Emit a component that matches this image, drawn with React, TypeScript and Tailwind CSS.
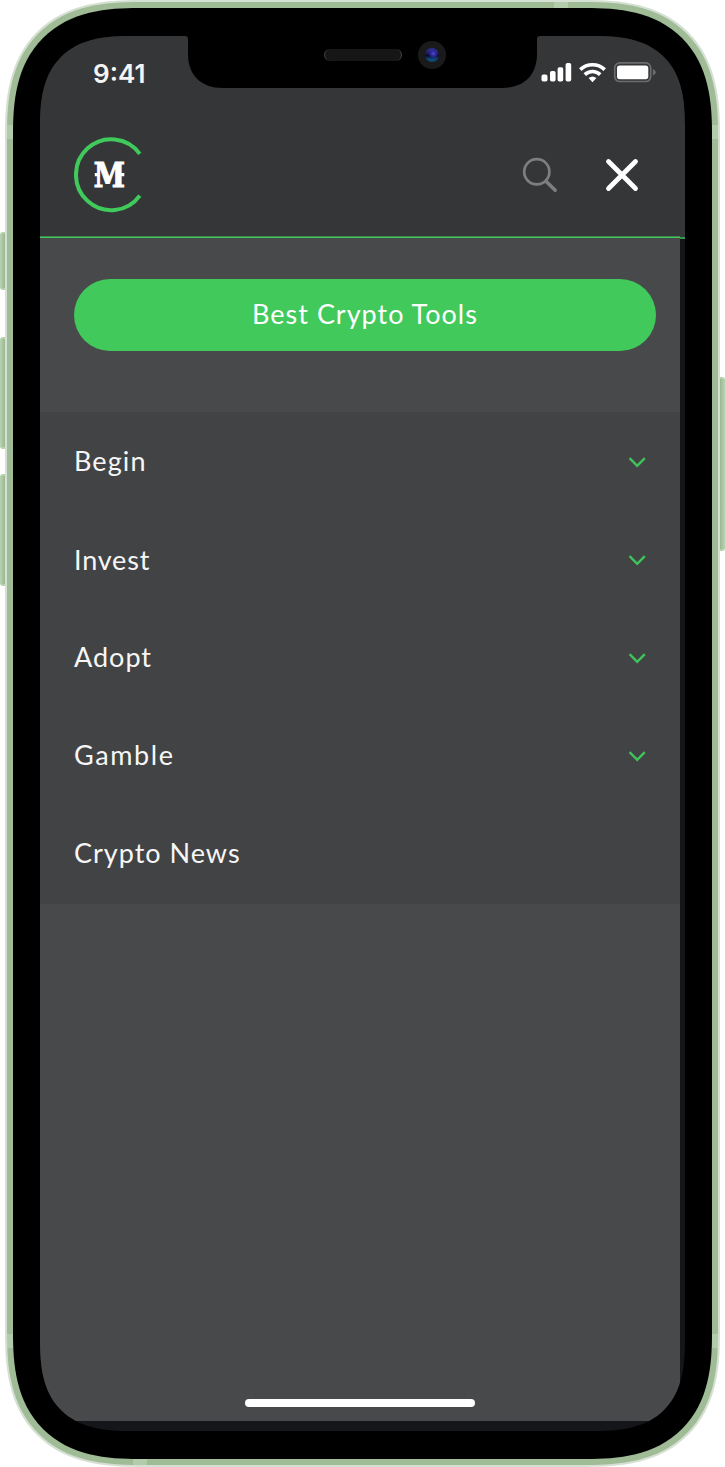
import React from "react";

const items = [
  { label: "Begin", text: "tracking-[1.1px] pb-[4px]", open: true },
  { label: "Invest", text: "tracking-[0.8px] pb-[2px]", open: true },
  { label: "Adopt", text: "tracking-[1px] pb-[4px]", open: true },
  { label: "Gamble", text: "tracking-[1.6px] pb-[4px]", open: true },
  { label: "Crypto News", text: "tracking-[1px] pb-[4px]", open: false },
];

function Logo() {
  return (
    <svg width="68" height="76" viewBox="0 0 68 76" className="block">
      <path d="M65.8 16.8 A35.3 35.5 0 1 0 65.8 58.6" fill="none" stroke="#3fca5b" strokeWidth="4" />
      <text x="19.8" y="49.6" fontFamily="DejaVu Serif" fontWeight="700" fontSize="33" fill="#fff" stroke="#fff" strokeWidth="1.1" textLength="31.2" lengthAdjust="spacingAndGlyphs">M</text>
      <path d="M20.8 37.6h5M45.3 37.6h5" stroke="#fff" strokeWidth="3.4" />
    </svg>
  );
}

function StatusIcons() {
  return (
    <svg width="116" height="22" viewBox="0 0 116 22" className="block">
      <g fill="#fff">
        <rect x="1.5" y="13.6" width="6" height="7" rx="1.8" />
        <rect x="10" y="10" width="5.6" height="10.6" rx="1.8" />
        <rect x="17.6" y="6.2" width="5.6" height="14.4" rx="1.8" />
        <rect x="25.6" y="2" width="5.6" height="18.6" rx="1.8" />
      </g>
      <g fill="none" stroke="#fff" strokeWidth="3.6">
        <path d="M40.3 8.6a17.6 17.6 0 0 1 24.4 0" />
        <path d="M44.8 13.6a11 11 0 0 1 15.4 0" />
      </g>
      <path d="M48.6 17.1a6 6 0 0 1 7.8 0l-3.9 4.1z" fill="#fff" />
      <rect x="74.7" y="1.9" width="36" height="18.6" rx="5" fill="none" stroke="#6b6c6e" strokeWidth="1.7" />
      <rect x="77" y="4.6" width="31.3" height="13.6" rx="2.6" fill="#fff" />
      <path d="M112.9 8q2.8 1 2.8 3.3t-2.8 3.3z" fill="#6b6c6e" />
    </svg>
  );
}

function Chevron() {
  return (
    <svg width="18" height="14" viewBox="0 0 18 14" fill="none" stroke="#3fc45b" strokeWidth="2.4">
      <path d="M1.6 3.2l7.6 7.6L16.8 3.2" />
    </svg>
  );
}

function SideButton({ className }: { className: string }) {
  return <div className={"w-[10px] rounded-[3px] border-y-2 border-[#b4d3ad] to-60% from-[#b9d4b1] to-[#94b08c] " + className} />;
}

function Notch() {
  return (
    <div className="absolute inset-x-0 top-0 flex justify-center">
      <div className="grid w-[355px] grid-cols-1 grid-rows-1">
        <svg width="355" height="52" viewBox="0 0 355 52" className="col-start-1 row-start-1 block">
          <path d="M0 0Q3 0 3 3V18C3 39 16 52 38 52H317C339 52 352 39 352 18V3Q352 0 355 0Z" fill="#000" />
        </svg>
        <div className="z-10 col-start-1 row-start-1 flex h-[38px] items-center gap-4 pl-[139px]">
          <div className="h-[12px] w-[78px] rounded-full border-x border-[#444] bg-[#161616]" />
          <div className="flex size-[28px] items-center justify-center rounded-full bg-[#1a1a1b]">
            <div className="size-[14px] rounded-full bg-[radial-gradient(circle_at_60%_40%,#5a48c8_0%,#2d2a9a_20%,transparent_45%),linear-gradient(to_bottom,#2c2c90_15%,#090b2c_55%,#0c4a78_80%)]" />
          </div>
        </div>
      </div>
    </div>
  );
}

export default function App() {
  return (
    <div className="flex h-[1467px] w-[725px] overflow-hidden bg-white font-[Lato,sans-serif]">
      <div className="flex w-[5px] shrink-0 flex-col pt-[232px]">
        <SideButton className="h-[58px] shrink-0 bg-gradient-to-r" />
        <SideButton className="mt-[47px] h-[112px] shrink-0 bg-gradient-to-r" />
        <SideButton className="mt-[25px] h-[112px] shrink-0 bg-gradient-to-r" />
      </div>
      <div className="z-10 h-[1467px] w-[715px] shrink-0 rounded-[134px] bg-[#d5e0d2] p-[2px] [corner-shape:superellipse(1.35)]">
        <div className="h-full rounded-[132px] bg-[#9fbc97] bg-[linear-gradient(#b2cbab,#b2cbab),linear-gradient(#b2cbab,#b2cbab),linear-gradient(#b2cbab,#b2cbab),linear-gradient(#b2cbab,#b2cbab)] bg-[length:14px_6px,14px_6px,100%_14px,100%_14px] bg-[position:547px_0,126px_100%,0_123px,0_1332px] bg-no-repeat p-[6px] [corner-shape:superellipse(1.35)]">
          <div className="h-full rounded-[126px] bg-black px-[27px] py-[28px] [corner-shape:superellipse(1.35)]">
            <div className="relative flex h-full w-[645px] flex-col overflow-hidden rounded-[92px] bg-[#15161a] [corner-shape:superellipse(1.42)]">
              <header className="flex h-[200px] shrink-0 flex-col bg-[#353638]">
                <div className="flex h-[72px] items-center justify-between pl-[53px] pr-[29px]">
                  <span className="pt-[4px] font-['Inter',sans-serif] text-[26px] font-semibold leading-none text-[#f4f4f4]">9:41</span>
                  <StatusIcons />
                </div>
                <div className="flex items-center pl-[34px] pr-[46px] pt-[29px]">
                  <Logo />
                  <svg width="36" height="36" viewBox="0 0 36 36" fill="none" stroke="#7d7e7f" strokeWidth="2.7" className="ml-auto">
                    <circle cx="14.8" cy="14.8" r="12.6" />
                    <path d="M24 24.3l9.2 9" strokeWidth="3.6" strokeLinecap="round" />
                  </svg>
                  <svg width="34" height="34" viewBox="0 0 34 34" stroke="#fff" strokeWidth="4.8" strokeLinecap="round" className="ml-[47px]">
                    <path d="M3.5 3.5l27 27M30.5 3.5l-27 27" />
                  </svg>
                </div>
              </header>
              <div className="flex h-[2px] shrink-0">
                <div className="w-[640px] border-t border-[#3b8a4b] bg-[#46c75e]" />
                <div className="z-10 h-[3px] w-[5px] border-t border-[#353638] bg-[#39984d]" />
              </div>
              <main className="flex h-[1183px] w-[640px] shrink-0 flex-col bg-[#48494b] pb-[14px]">
                <div className="h-[174px] px-[34px] pt-[41px]">
                  <button className="flex h-[72px] w-[582px] items-center justify-center rounded-full bg-[#42c95c] pb-[2px] text-[27px] tracking-[1px] text-white">
                    Best Crypto Tools
                  </button>
                </div>
                <nav className="flex h-[492px] flex-col bg-[#424345] py-px">
                  {items.map((item) => (
                    <div key={item.label} className="flex flex-1 items-center justify-between px-[34px]">
                      <span className={"text-[27px] leading-none text-[#f6f6f6] " + item.text}>{item.label}</span>
                      {item.open && <Chevron />}
                    </div>
                  ))}
                </nav>
                <div className="mx-auto mt-auto h-[8px] w-[230px] rounded-full bg-white" />
              </main>
              <Notch />
            </div>
          </div>
        </div>
      </div>
      <div className="flex w-[5px] shrink-0 flex-col items-end pt-[377px]">
        <SideButton className="h-[174px] shrink-0 bg-gradient-to-l" />
      </div>
    </div>
  );
}
